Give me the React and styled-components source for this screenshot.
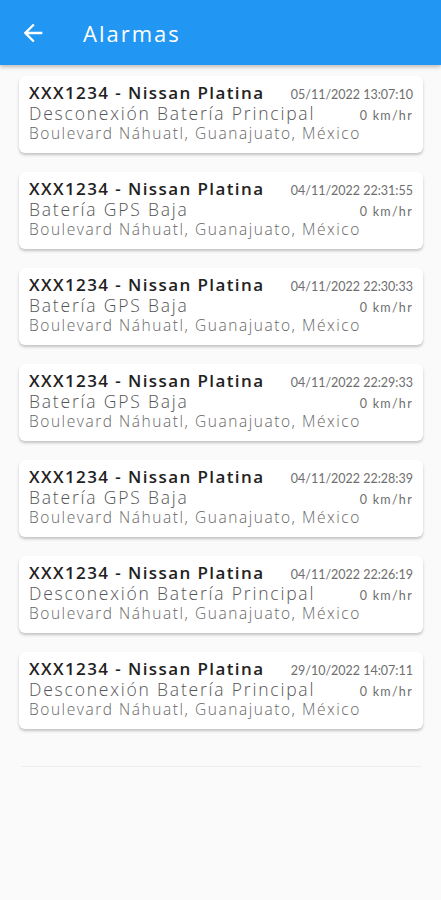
import React from 'react'
import styled, { createGlobalStyle } from 'styled-components'

const alarms = [
  { desc: 'Desconexión Batería Principal', date: '05/11/2022 13:07:10' },
  { desc: 'Batería GPS Baja', date: '04/11/2022 22:31:55' },
  { desc: 'Batería GPS Baja', date: '04/11/2022 22:30:33' },
  { desc: 'Batería GPS Baja', date: '04/11/2022 22:29:33' },
  { desc: 'Batería GPS Baja', date: '04/11/2022 22:28:39' },
  { desc: 'Desconexión Batería Principal', date: '04/11/2022 22:26:19' },
  { desc: 'Desconexión Batería Principal', date: '29/10/2022 14:07:11' },
]

export default function App() {
  return (
    <>
      <GlobalStyle />
      <Page>
        <Header>
          <BackButton>
            <svg width="28" height="28" viewBox="0 0 24 24" fill="#fff">
              <path d="M20 11H7.83l5.59-5.59L12 4l-8 8 8 8 1.41-1.41L7.83 13H20v-2z" />
            </svg>
          </BackButton>
          <Title>Alarmas</Title>
        </Header>
        <List>
          {alarms.map((a, i) => (
            <Card key={i}>
              <Row>
                <Vehicle>XXX1234 - Nissan Platina</Vehicle>
                <Meta>{a.date}</Meta>
              </Row>
              <Row>
                <Desc>{a.desc}</Desc>
                <Meta $spacing={1.3}>0 km/hr</Meta>
              </Row>
              <Address>Boulevard Náhuatl, Guanajuato, México</Address>
            </Card>
          ))}
          <Divider />
        </List>
      </Page>
    </>
  )
}

const GlobalStyle = createGlobalStyle`
    body {
        margin: 0;
        background: #fafafa;
        font-family: "Open Sans", "Noto Sans", sans-serif;
    }
`;
const Page = styled.div`
    min-height: 900px;
    background: #fafafa;
`;
const Header = styled.div`
    height: 65px;
    background-color: #2196f3;
    display: flex;
    align-items: center;
    box-shadow: 0 2px 4px rgba(0, 0, 0, 0.25);
    position: relative;
    z-index: 1;
`;
const BackButton = styled.div`
    width: 28px;
    height: 28px;
    margin-left: 19px;
    display: flex;
`;
const Title = styled.div`
    margin-left: 36px;
    color: #fff;
    font-size: 22px;
    font-weight: 500;
    letter-spacing: 2px;
`;
const List = styled.div`
    display: flex;
    flex-direction: column;
    gap: 19px;
    padding: 11px 18px 0 19px;
`;
const Card = styled.div`
    height: 77px;
    box-sizing: border-box;
    background: #fff;
    border-radius: 6px;
    box-shadow: 0 2px 3px rgba(0, 0, 0, 0.22);
    padding: 6px 10px 0 10px;
    display: flex;
    flex-direction: column;
`;
const Row = styled.div`
    height: 21px;
    display: flex;
    justify-content: space-between;
    align-items: baseline;
`;
const Vehicle = styled.div`
    font-size: 17px;
    line-height: 21px;
    font-weight: 600;
    color: #222;
    letter-spacing: 1.4px;
    white-space: nowrap;
`;
const Meta = styled.div`
    font-family: Lato, sans-serif;
    font-size: 12.5px;
    line-height: 16px;
    font-weight: 400;
    color: #6e6e6e;
    white-space: nowrap;
    letter-spacing: ${p => p.$spacing || 0}px;
`;
const Desc = styled.div`
    font-size: 17.5px;
    line-height: 21px;
    font-weight: 300;
    color: #555;
    letter-spacing: 1.8px;
    white-space: nowrap;
`;
const Address = styled.div`
    font-size: 15.5px;
    line-height: 19px;
    font-weight: 300;
    color: #666;
    letter-spacing: 1.55px;
    white-space: nowrap;
`;
const Divider = styled.div`
    height: 1px;
    background: #eeeeee;
    margin: 18px 2px 0;
`;
